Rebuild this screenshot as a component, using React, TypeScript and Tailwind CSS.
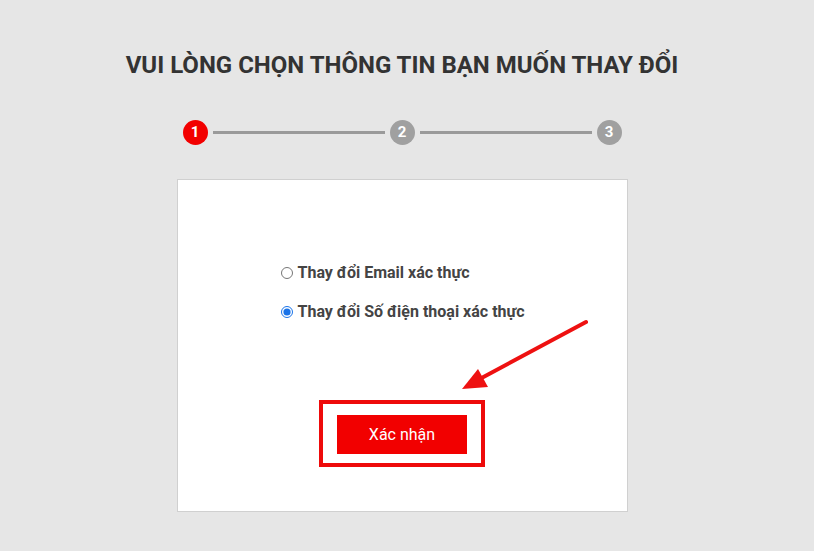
import React, { useState } from 'react'

const STEPS = ['1', '2', '3']

export default function App() {
  const [choice, setChoice] = useState('phone')

  return (
    <div className="min-h-[551px] w-full bg-[#e6e6e6] pr-[10px] font-['Roboto','Liberation_Sans',sans-serif]">
      <h1 className="pt-[51px] text-center text-[24px] font-bold leading-[28px] text-[#333333]">
        VUI LÒNG CHỌN THÔNG TIN BẠN MUỐN THAY ĐỔI
      </h1>

      {/* Stepper */}
      <div className="mx-auto mt-[41px] flex w-[439px] items-center">
        {STEPS.map((s, i) => (
          <React.Fragment key={s}>
            {i > 0 && <div className="mx-[5px] h-[3px] flex-1 bg-[#9a9a9a]" />}
            <div
              className={`flex h-[25px] w-[25px] items-center justify-center rounded-full text-[15px] font-bold text-white ${
                i === 0 ? 'bg-[#f20000]' : 'bg-[#a0a0a0]'
              }`}
            >
              {s}
            </div>
          </React.Fragment>
        ))}
      </div>

      {/* Card */}
      <div className="relative mx-auto mt-[34px] h-[333px] w-[451px] border border-[#d0d0d0] bg-white">
        <div className="mx-auto mt-[83px] flex w-[243px] flex-col gap-[19px] whitespace-nowrap">
          <label className="flex items-center gap-[5px] text-[16px] font-bold leading-[20px] text-[#444444]">
            <input
              type="radio"
              name="choice"
              checked={choice === 'email'}
              onChange={() => setChoice('email')}
              className="m-0 h-[12px] w-[12px] shrink-0 accent-[#1a73e8]"
            />
            Thay đổi Email xác thực
          </label>
          <label className="flex items-center gap-[5px] text-[16px] font-bold leading-[20px] text-[#444444]">
            <input
              type="radio"
              name="choice"
              checked={choice === 'phone'}
              onChange={() => setChoice('phone')}
              className="m-0 h-[12px] w-[12px] shrink-0 accent-[#1a73e8]"
            />
            Thay đổi Số điện thoại xác thực
          </label>
        </div>

        {/* Highlighted button */}
        <div className="mx-auto mt-[78px] flex h-[67px] w-[166px] items-center justify-center border-[4px] border-[#ee0a0a] pt-[2px]">
          <button className="h-[39px] w-[130px] bg-[#f20000] text-[16px] text-white">Xác nhận</button>
        </div>

        {/* Annotation arrow */}
        <svg className="absolute left-[270px] top-[135px]" width="150" height="80" viewBox="0 0 150 80">
          <line x1="138" y1="7" x2="28" y2="66" stroke="#ee1111" strokeWidth="4" strokeLinecap="round" />
          <polygon points="14,74 30,54 40,72" fill="#ee1111" />
        </svg>
      </div>
    </div>
  )
}
